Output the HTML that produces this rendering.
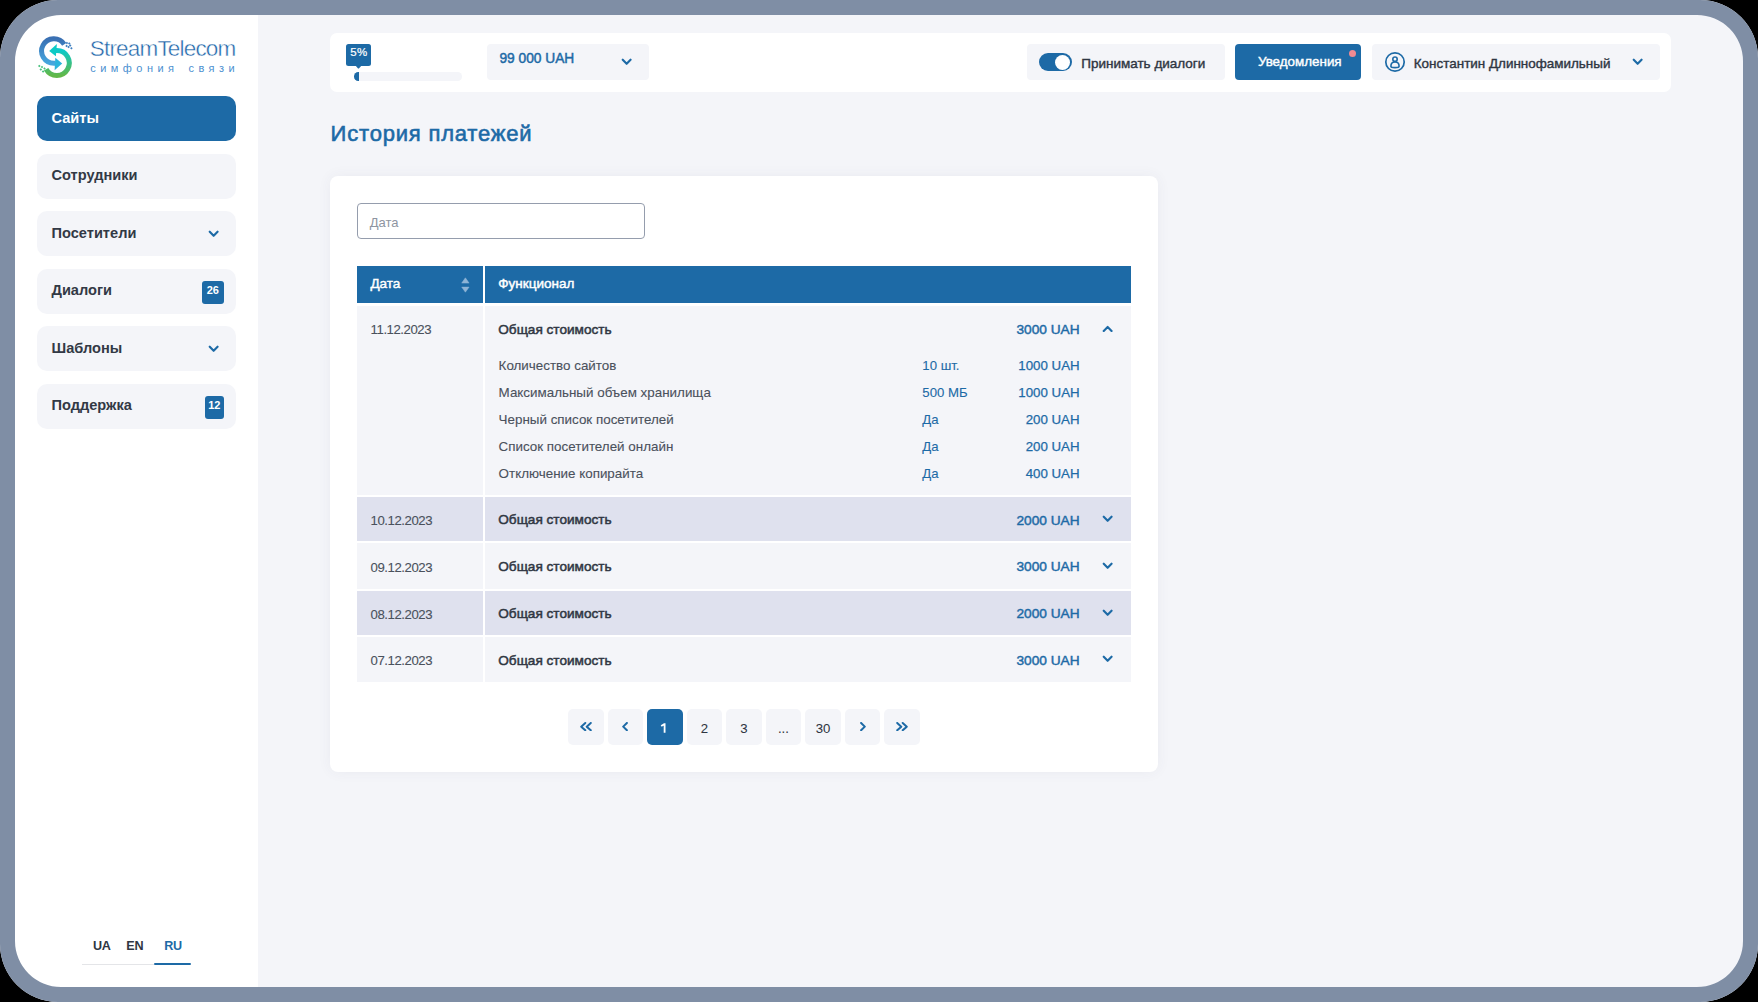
<!DOCTYPE html><html><head><meta charset="utf-8"><title>История платежей</title><style>html,body{margin:0;padding:0;width:1758px;height:1002px;overflow:hidden;background:#000;font-family:"Liberation Sans", sans-serif;}</style></head><body>
<div style="position:absolute;left:0;top:0;width:1758px;height:1002px;background:#f4f5f9"></div>
<div style="position:absolute;left:15px;top:15px;width:243px;height:972px;background:#fff;border-radius:0px;"></div>
<svg style="position:absolute;left:34px;top:32px" width="44" height="50" viewBox="0 0 44 50">
<defs>
<linearGradient id="gb" x1="0" y1="0" x2="0" y2="1"><stop offset="0" stop-color="#3a70b3"/><stop offset="1" stop-color="#45a6de"/></linearGradient>
<linearGradient id="gg" x1="0" y1="0" x2="0" y2="1"><stop offset="0" stop-color="#0cc9c9"/><stop offset="1" stop-color="#62b849"/></linearGradient>
</defs>
<path d="M30.22 12.30 A12.3 12.3 0 1 0 19.90 31.30 L21.5 31.30" fill="none" stroke="url(#gb)" stroke-width="5.0"/><path d="M21.3 25.8 L28.2 31.5 L20.6 38.3 Z" fill="#2bb3dc"/><path d="M22.0 18.60 L22.85 18.60 A12.4 12.4 0 1 1 12.11 37.20" fill="none" stroke="url(#gg)" stroke-width="5.0"/><path d="M22.9 11.9 L15.2 19 L21.9 24.2 Z" fill="#0ccbc6"/><rect x="32.0" y="10.0" width="1.8" height="1.8" transform="rotate(45 32.9 10.9)" fill="#3f7fc0"/><rect x="34.4" y="10.7" width="1.8" height="1.8" transform="rotate(45 35.3 11.6)" fill="#3f7fc0"/><rect x="35.300000000000004" y="12.5" width="1.8" height="1.8" transform="rotate(45 36.2 13.4)" fill="#3f7fc0"/><rect x="31.700000000000003" y="13.0" width="1.8" height="1.8" transform="rotate(45 32.6 13.9)" fill="#3f7fc0"/><rect x="33.7" y="14.2" width="1.8" height="1.8" transform="rotate(45 34.6 15.1)" fill="#3f7fc0"/><rect x="36.5" y="15.4" width="1.8" height="1.8" transform="rotate(45 37.4 16.3)" fill="#3f7fc0"/><rect x="4.3999999999999995" y="33.0" width="1.8" height="1.8" transform="rotate(45 5.3 33.9)" fill="#45c07a"/><rect x="7.1" y="34.2" width="1.8" height="1.8" transform="rotate(45 8.0 35.1)" fill="#45c07a"/><rect x="9.6" y="35.5" width="1.8" height="1.8" transform="rotate(45 10.5 36.4)" fill="#45c07a"/><rect x="5.8999999999999995" y="36.5" width="1.8" height="1.8" transform="rotate(45 6.8 37.4)" fill="#45c07a"/><rect x="8.2" y="38.5" width="1.8" height="1.8" transform="rotate(45 9.1 39.4)" fill="#45c07a"/></svg>
<div style="position:absolute;left:89.8px;top:38.15px;font-size:22.5px;line-height:1;font-weight:400;color:#2266a9;letter-spacing:-0.82px;white-space:nowrap;font-family:'Liberation Sans', sans-serif;-webkit-text-stroke:0.42px #fff;">StreamTelecom</div>
<div style="position:absolute;left:90.3px;top:62.59px;font-size:11px;line-height:1;font-weight:400;color:#4b8fd0;letter-spacing:4.45px;white-space:nowrap;font-family:'Liberation Sans', sans-serif;word-spacing:2.5px">симфония связи</div>
<div style="position:absolute;left:36.6px;top:96px;width:199.9px;height:45px;background:#1d6aa6;border-radius:10px;"></div>
<div style="position:absolute;left:51.5px;top:110.94px;font-size:14.6px;line-height:1;font-weight:700;color:#fff;letter-spacing:0px;white-space:nowrap;font-family:'Liberation Sans', sans-serif;">Сайты</div>
<div style="position:absolute;left:36.6px;top:153.5px;width:199.9px;height:45.0px;background:#f4f5f9;border-radius:10px;"></div>
<div style="position:absolute;left:51.5px;top:168.44px;font-size:14.6px;line-height:1;font-weight:700;color:#323945;letter-spacing:0px;white-space:nowrap;font-family:'Liberation Sans', sans-serif;">Сотрудники</div>
<div style="position:absolute;left:36.6px;top:211px;width:199.9px;height:45px;background:#f4f5f9;border-radius:10px;"></div>
<div style="position:absolute;left:51.5px;top:225.94px;font-size:14.6px;line-height:1;font-weight:700;color:#323945;letter-spacing:0px;white-space:nowrap;font-family:'Liberation Sans', sans-serif;">Посетители</div>
<svg style="position:absolute;left:208.05px;top:229.6px" width="11.3" height="7.8" viewBox="0 0 11.3 7.8"><path d="M0.73 0.73 L4.65 4.85 L8.57 0.73" transform="translate(1,1)" fill="none" stroke="#1d6aa6" stroke-width="2.1" stroke-linecap="round" stroke-linejoin="round"/></svg>
<div style="position:absolute;left:36.6px;top:268.5px;width:199.9px;height:45.0px;background:#f4f5f9;border-radius:10px;"></div>
<div style="position:absolute;left:51.5px;top:283.44px;font-size:14.6px;line-height:1;font-weight:700;color:#323945;letter-spacing:0px;white-space:nowrap;font-family:'Liberation Sans', sans-serif;">Диалоги</div>
<div style="position:absolute;left:201.5px;top:281.1px;width:22.5px;height:22.5px;background:#1d6aa6;border-radius:3px;"></div>
<div style="position:absolute;left:12.75px;width:400px;text-align:center;top:285.29px;font-size:11px;line-height:1;font-weight:700;color:#fff;letter-spacing:0px;white-space:nowrap;font-family:'Liberation Sans', sans-serif;">26</div>
<div style="position:absolute;left:36.6px;top:326px;width:199.9px;height:45px;background:#f4f5f9;border-radius:10px;"></div>
<div style="position:absolute;left:51.5px;top:340.94px;font-size:14.6px;line-height:1;font-weight:700;color:#323945;letter-spacing:0px;white-space:nowrap;font-family:'Liberation Sans', sans-serif;">Шаблоны</div>
<svg style="position:absolute;left:208.05px;top:344.6px" width="11.3" height="7.8" viewBox="0 0 11.3 7.8"><path d="M0.73 0.73 L4.65 4.85 L8.57 0.73" transform="translate(1,1)" fill="none" stroke="#1d6aa6" stroke-width="2.1" stroke-linecap="round" stroke-linejoin="round"/></svg>
<div style="position:absolute;left:36.6px;top:383.5px;width:199.9px;height:45.0px;background:#f4f5f9;border-radius:10px;"></div>
<div style="position:absolute;left:51.5px;top:398.44px;font-size:14.6px;line-height:1;font-weight:700;color:#323945;letter-spacing:0px;white-space:nowrap;font-family:'Liberation Sans', sans-serif;">Поддержка</div>
<div style="position:absolute;left:204.5px;top:396.1px;width:19.5px;height:22.5px;background:#1d6aa6;border-radius:3px;"></div>
<div style="position:absolute;left:14.25px;width:400px;text-align:center;top:400.29px;font-size:11px;line-height:1;font-weight:700;color:#fff;letter-spacing:0px;white-space:nowrap;font-family:'Liberation Sans', sans-serif;">12</div>
<div style="position:absolute;left:92.9px;top:939.83px;font-size:12.6px;line-height:1;font-weight:700;color:#2f3642;letter-spacing:-0.3px;white-space:nowrap;font-family:'Liberation Sans', sans-serif;">UA</div>
<div style="position:absolute;left:126.3px;top:939.83px;font-size:12.6px;line-height:1;font-weight:700;color:#2f3642;letter-spacing:-0.3px;white-space:nowrap;font-family:'Liberation Sans', sans-serif;">EN</div>
<div style="position:absolute;left:164.2px;top:939.83px;font-size:12.6px;line-height:1;font-weight:700;color:#1d6aa6;letter-spacing:-0.3px;white-space:nowrap;font-family:'Liberation Sans', sans-serif;">RU</div>
<div style="position:absolute;left:82.3px;top:963.6px;width:72.10000000000001px;height:1.5px;background:#e4e5e8;border-radius:0px;"></div>
<div style="position:absolute;left:154.4px;top:963.2px;width:36.19999999999999px;height:2.199999999999932px;background:#1d6aa6;border-radius:1px;"></div>
<div style="position:absolute;left:330px;top:32.5px;width:1341px;height:59.0px;background:#fff;border-radius:7px;"></div>
<div style="position:absolute;left:346.1px;top:43.7px;width:25.099999999999966px;height:22.200000000000003px;background:#1d6aa6;border-radius:2.5px;"></div>
<svg style="position:absolute;left:355.4px;top:65.4px" width="7" height="4" viewBox="0 0 7 4"><path d="M0 0 L7 0 L3.9 3.4 Q3.5 3.8 3.1 3.4 Z" fill="#1d6aa6"/></svg>
<div style="position:absolute;left:158.89999999999998px;width:400px;text-align:center;top:47.27px;font-size:11.5px;line-height:1;font-weight:400;color:#fff;letter-spacing:0.3px;white-space:nowrap;font-family:'Liberation Sans', sans-serif;-webkit-text-stroke:0.2px #fff;">5%</div>
<div style="position:absolute;left:354px;top:72.1px;width:108.30000000000001px;height:8.600000000000009px;background:#f4f5f9;border-radius:4.3px;"></div>
<div style="position:absolute;left:354px;top:72.1px;width:5.199999999999989px;height:8.600000000000009px;background:#1d6aa6;border-radius:4.3px;border-top-right-radius:0;border-bottom-right-radius:0"></div>
<div style="position:absolute;left:486.8px;top:44px;width:161.90000000000003px;height:36.3px;background:#f4f5f9;border-radius:4px;"></div>
<div style="position:absolute;left:499.4px;top:52.26px;font-size:13.75px;line-height:1;font-weight:400;color:#1d6aa6;letter-spacing:0px;white-space:nowrap;font-family:'Liberation Sans', sans-serif;-webkit-text-stroke:0.45px #1d6aa6;">99 000 UAH</div>
<svg style="position:absolute;left:620.55px;top:58.1px" width="11.3" height="7.8" viewBox="0 0 11.3 7.8"><path d="M0.73 0.73 L4.65 4.85 L8.57 0.73" transform="translate(1,1)" fill="none" stroke="#1d6aa6" stroke-width="2.1" stroke-linecap="round" stroke-linejoin="round"/></svg>
<div style="position:absolute;left:1026.5px;top:44px;width:198.0px;height:36.3px;background:#f4f5f9;border-radius:4px;"></div>
<div style="position:absolute;left:1039.1px;top:53.2px;width:32.600000000000136px;height:18.0px;background:#1d6aa6;border-radius:9px;"></div>
<div style="position:absolute;left:1055.2px;top:54.9px;width:14.700000000000045px;height:14.699999999999996px;background:#fff;border-radius:8px;"></div>
<div style="position:absolute;left:1081.2px;top:56.77px;font-size:13.5px;line-height:1;font-weight:400;color:#2f3642;letter-spacing:0px;white-space:nowrap;font-family:'Liberation Sans', sans-serif;-webkit-text-stroke:0.4px #2f3642;">Принимать диалоги</div>
<div style="position:absolute;left:1235.3px;top:44px;width:126.0px;height:36.400000000000006px;background:#1d6aa6;border-radius:4px;"></div>
<div style="position:absolute;left:1257.9px;top:55.16px;font-size:13.4px;line-height:1;font-weight:400;color:#fff;letter-spacing:0px;white-space:nowrap;font-family:'Liberation Sans', sans-serif;-webkit-text-stroke:0.4px #fff;">Уведомления</div>
<div style="position:absolute;left:1348.7px;top:49.7px;width:7.2999999999999545px;height:7.399999999999999px;background:#f08a92;border-radius:4px;"></div>
<div style="position:absolute;left:1372.3px;top:44px;width:287.79999999999995px;height:36.3px;background:#f4f5f9;border-radius:4px;"></div>
<svg style="position:absolute;left:1383.8px;top:51px" width="22" height="22" viewBox="0 0 22 22"><circle cx="11" cy="11" r="9.2" fill="none" stroke="#1d6aa6" stroke-width="1.7"/><circle cx="11" cy="8.2" r="2.2" fill="none" stroke="#1d6aa6" stroke-width="1.6"/><path d="M6.9 15.2 C6.9 12.4 8.7 11 11 11 C13.3 11 15.1 12.4 15.1 15.2 C15.1 16.4 13.5 16.6 11 16.6 C8.5 16.6 6.9 16.4 6.9 15.2 Z" fill="none" stroke="#1d6aa6" stroke-width="1.6"/></svg>
<div style="position:absolute;left:1413.8px;top:56.71px;font-size:13.45px;line-height:1;font-weight:400;color:#2f3642;letter-spacing:0px;white-space:nowrap;font-family:'Liberation Sans', sans-serif;-webkit-text-stroke:0.4px #2f3642;">Константин Длиннофамильный</div>
<svg style="position:absolute;left:1631.95px;top:58.4px" width="11.3" height="7.8" viewBox="0 0 11.3 7.8"><path d="M0.73 0.73 L4.65 4.85 L8.57 0.73" transform="translate(1,1)" fill="none" stroke="#1d6aa6" stroke-width="2.1" stroke-linecap="round" stroke-linejoin="round"/></svg>
<div style="position:absolute;left:330.6px;top:122.78px;font-size:22px;line-height:1;font-weight:400;color:#1d6aa6;letter-spacing:0.8px;white-space:nowrap;font-family:'Liberation Sans', sans-serif;-webkit-text-stroke:0.6px #1d6aa6;">История платежей</div>
<div style="position:absolute;left:330px;top:176px;width:828px;height:595.7px;background:#fff;border-radius:8px;box-shadow:0 0 14px rgba(60,70,110,0.06)"></div>
<div style="position:absolute;left:357.3px;top:203.2px;width:285.3px;height:33.4px;border:1px solid #959dad;border-radius:4px;background:#fff"></div>
<div style="position:absolute;left:369.8px;top:216.00px;font-size:13px;line-height:1;font-weight:400;color:#8e95a1;letter-spacing:0px;white-space:nowrap;font-family:'Liberation Sans', sans-serif;">Дата</div>
<div style="position:absolute;left:357px;top:266.4px;width:125.69999999999999px;height:37.10000000000002px;background:#1d6aa6;border-radius:0px;"></div>
<div style="position:absolute;left:484.9px;top:266.4px;width:646.1px;height:37.10000000000002px;background:#1d6aa6;border-radius:0px;"></div>
<div style="position:absolute;left:370.4px;top:276.57px;font-size:13.5px;line-height:1;font-weight:400;color:#fff;letter-spacing:0px;white-space:nowrap;font-family:'Liberation Sans', sans-serif;-webkit-text-stroke:0.45px #fff;">Дата</div>
<svg style="position:absolute;left:460.8px;top:277px" width="9" height="16" viewBox="0 0 9 16"><path d="M0.7 6.1 L4.4 0.8 L8.1 6.1 Z" fill="#8fb4d6" stroke="#8fb4d6" stroke-width="0.5" stroke-linejoin="round"/><path d="M0.7 10.1 L4.4 15.2 L8.1 10.1 Z" fill="#8fb4d6" stroke="#8fb4d6" stroke-width="0.5" stroke-linejoin="round"/></svg>
<div style="position:absolute;left:498.3px;top:276.57px;font-size:13.5px;line-height:1;font-weight:400;color:#fff;letter-spacing:0px;white-space:nowrap;font-family:'Liberation Sans', sans-serif;-webkit-text-stroke:0.45px #fff;">Функционал</div>
<div style="position:absolute;left:357px;top:305.5px;width:126px;height:189.60000000000002px;background:#f4f5f9;border-radius:0px;"></div>
<div style="position:absolute;left:485px;top:305.5px;width:646px;height:189.60000000000002px;background:#f4f5f9;border-radius:0px;"></div>
<div style="position:absolute;left:370.6px;top:323.23px;font-size:13.2px;line-height:1;font-weight:400;color:#4a515c;letter-spacing:-0.45px;white-space:nowrap;font-family:'Liberation Sans', sans-serif;-webkit-text-stroke:0.1px #4a515c;">11.12.2023</div>
<div style="position:absolute;left:498.3px;top:322.59px;font-size:13.6px;line-height:1;font-weight:400;color:#2f3642;letter-spacing:0px;white-space:nowrap;font-family:'Liberation Sans', sans-serif;-webkit-text-stroke:0.5px #2f3642;">Общая стоимость</div>
<div style="position:absolute;right:678.4000000000001px;text-align:right;top:322.80px;font-size:13.7px;line-height:1;font-weight:400;color:#1d6aa6;letter-spacing:0px;white-space:nowrap;font-family:'Liberation Sans', sans-serif;-webkit-text-stroke:0.45px #1d6aa6;">3000 UAH</div>
<svg style="position:absolute;left:1101.75px;top:324.7px" width="11.3" height="7.8" viewBox="0 0 11.3 7.8"><path d="M0.73 5.06 L4.65 0.95 L8.57 5.06" transform="translate(1,1)" fill="none" stroke="#1d6aa6" stroke-width="2.1" stroke-linecap="round" stroke-linejoin="round"/></svg>
<div style="position:absolute;left:357px;top:496.8px;width:126px;height:44.400000000000034px;background:#dfe1ee;border-radius:0px;"></div>
<div style="position:absolute;left:485px;top:496.8px;width:646px;height:44.400000000000034px;background:#dfe1ee;border-radius:0px;"></div>
<div style="position:absolute;left:370.6px;top:513.93px;font-size:13.2px;line-height:1;font-weight:400;color:#4a515c;letter-spacing:-0.45px;white-space:nowrap;font-family:'Liberation Sans', sans-serif;-webkit-text-stroke:0.1px #4a515c;">10.12.2023</div>
<div style="position:absolute;left:498.3px;top:513.29px;font-size:13.6px;line-height:1;font-weight:400;color:#2f3642;letter-spacing:0px;white-space:nowrap;font-family:'Liberation Sans', sans-serif;-webkit-text-stroke:0.5px #2f3642;">Общая стоимость</div>
<div style="position:absolute;right:678.4000000000001px;text-align:right;top:513.50px;font-size:13.7px;line-height:1;font-weight:400;color:#1d6aa6;letter-spacing:0px;white-space:nowrap;font-family:'Liberation Sans', sans-serif;-webkit-text-stroke:0.45px #1d6aa6;">2000 UAH</div>
<svg style="position:absolute;left:1101.95px;top:515.1px" width="11.3" height="7.8" viewBox="0 0 11.3 7.8"><path d="M0.73 0.73 L4.65 4.85 L8.57 0.73" transform="translate(1,1)" fill="none" stroke="#1d6aa6" stroke-width="2.1" stroke-linecap="round" stroke-linejoin="round"/></svg>
<div style="position:absolute;left:357px;top:543.3px;width:126px;height:45.30000000000007px;background:#f4f5f9;border-radius:0px;"></div>
<div style="position:absolute;left:485px;top:543.3px;width:646px;height:45.30000000000007px;background:#f4f5f9;border-radius:0px;"></div>
<div style="position:absolute;left:370.6px;top:560.88px;font-size:13.2px;line-height:1;font-weight:400;color:#4a515c;letter-spacing:-0.45px;white-space:nowrap;font-family:'Liberation Sans', sans-serif;-webkit-text-stroke:0.1px #4a515c;">09.12.2023</div>
<div style="position:absolute;left:498.3px;top:560.24px;font-size:13.6px;line-height:1;font-weight:400;color:#2f3642;letter-spacing:0px;white-space:nowrap;font-family:'Liberation Sans', sans-serif;-webkit-text-stroke:0.5px #2f3642;">Общая стоимость</div>
<div style="position:absolute;right:678.4000000000001px;text-align:right;top:560.45px;font-size:13.7px;line-height:1;font-weight:400;color:#1d6aa6;letter-spacing:0px;white-space:nowrap;font-family:'Liberation Sans', sans-serif;-webkit-text-stroke:0.45px #1d6aa6;">3000 UAH</div>
<svg style="position:absolute;left:1101.95px;top:562.05px" width="11.3" height="7.8" viewBox="0 0 11.3 7.8"><path d="M0.73 0.73 L4.65 4.85 L8.57 0.73" transform="translate(1,1)" fill="none" stroke="#1d6aa6" stroke-width="2.1" stroke-linecap="round" stroke-linejoin="round"/></svg>
<div style="position:absolute;left:357px;top:590.5px;width:126px;height:44.200000000000045px;background:#dfe1ee;border-radius:0px;"></div>
<div style="position:absolute;left:485px;top:590.5px;width:646px;height:44.200000000000045px;background:#dfe1ee;border-radius:0px;"></div>
<div style="position:absolute;left:370.6px;top:607.53px;font-size:13.2px;line-height:1;font-weight:400;color:#4a515c;letter-spacing:-0.45px;white-space:nowrap;font-family:'Liberation Sans', sans-serif;-webkit-text-stroke:0.1px #4a515c;">08.12.2023</div>
<div style="position:absolute;left:498.3px;top:606.89px;font-size:13.6px;line-height:1;font-weight:400;color:#2f3642;letter-spacing:0px;white-space:nowrap;font-family:'Liberation Sans', sans-serif;-webkit-text-stroke:0.5px #2f3642;">Общая стоимость</div>
<div style="position:absolute;right:678.4000000000001px;text-align:right;top:607.10px;font-size:13.7px;line-height:1;font-weight:400;color:#1d6aa6;letter-spacing:0px;white-space:nowrap;font-family:'Liberation Sans', sans-serif;-webkit-text-stroke:0.45px #1d6aa6;">2000 UAH</div>
<svg style="position:absolute;left:1101.95px;top:608.7px" width="11.3" height="7.8" viewBox="0 0 11.3 7.8"><path d="M0.73 0.73 L4.65 4.85 L8.57 0.73" transform="translate(1,1)" fill="none" stroke="#1d6aa6" stroke-width="2.1" stroke-linecap="round" stroke-linejoin="round"/></svg>
<div style="position:absolute;left:357px;top:636.8px;width:126px;height:44.90000000000009px;background:#f4f5f9;border-radius:0px;"></div>
<div style="position:absolute;left:485px;top:636.8px;width:646px;height:44.90000000000009px;background:#f4f5f9;border-radius:0px;"></div>
<div style="position:absolute;left:370.6px;top:654.18px;font-size:13.2px;line-height:1;font-weight:400;color:#4a515c;letter-spacing:-0.45px;white-space:nowrap;font-family:'Liberation Sans', sans-serif;-webkit-text-stroke:0.1px #4a515c;">07.12.2023</div>
<div style="position:absolute;left:498.3px;top:653.54px;font-size:13.6px;line-height:1;font-weight:400;color:#2f3642;letter-spacing:0px;white-space:nowrap;font-family:'Liberation Sans', sans-serif;-webkit-text-stroke:0.5px #2f3642;">Общая стоимость</div>
<div style="position:absolute;right:678.4000000000001px;text-align:right;top:653.75px;font-size:13.7px;line-height:1;font-weight:400;color:#1d6aa6;letter-spacing:0px;white-space:nowrap;font-family:'Liberation Sans', sans-serif;-webkit-text-stroke:0.45px #1d6aa6;">3000 UAH</div>
<svg style="position:absolute;left:1101.95px;top:655.35px" width="11.3" height="7.8" viewBox="0 0 11.3 7.8"><path d="M0.73 0.73 L4.65 4.85 L8.57 0.73" transform="translate(1,1)" fill="none" stroke="#1d6aa6" stroke-width="2.1" stroke-linecap="round" stroke-linejoin="round"/></svg>
<div style="position:absolute;left:498.6px;top:358.96px;font-size:13.4px;line-height:1;font-weight:400;color:#4a515c;letter-spacing:0px;white-space:nowrap;font-family:'Liberation Sans', sans-serif;-webkit-text-stroke:0.1px #4a515c;">Количество сайтов</div>
<div style="position:absolute;left:922.3px;top:359.13px;font-size:13.2px;line-height:1;font-weight:400;color:#1d6aa6;letter-spacing:0px;white-space:nowrap;font-family:'Liberation Sans', sans-serif;-webkit-text-stroke:0.1px #1d6aa6;">10 шт.</div>
<div style="position:absolute;right:678.4000000000001px;text-align:right;top:359.04px;font-size:13.3px;line-height:1;font-weight:400;color:#1d6aa6;letter-spacing:0px;white-space:nowrap;font-family:'Liberation Sans', sans-serif;-webkit-text-stroke:0.25px #1d6aa6;">1000 UAH</div>
<div style="position:absolute;left:498.6px;top:386.06px;font-size:13.4px;line-height:1;font-weight:400;color:#4a515c;letter-spacing:0px;white-space:nowrap;font-family:'Liberation Sans', sans-serif;-webkit-text-stroke:0.1px #4a515c;">Максимальный объем хранилища</div>
<div style="position:absolute;left:922.3px;top:386.23px;font-size:13.2px;line-height:1;font-weight:400;color:#1d6aa6;letter-spacing:0px;white-space:nowrap;font-family:'Liberation Sans', sans-serif;-webkit-text-stroke:0.1px #1d6aa6;">500 МБ</div>
<div style="position:absolute;right:678.4000000000001px;text-align:right;top:386.14px;font-size:13.3px;line-height:1;font-weight:400;color:#1d6aa6;letter-spacing:0px;white-space:nowrap;font-family:'Liberation Sans', sans-serif;-webkit-text-stroke:0.25px #1d6aa6;">1000 UAH</div>
<div style="position:absolute;left:498.6px;top:412.86px;font-size:13.4px;line-height:1;font-weight:400;color:#4a515c;letter-spacing:0px;white-space:nowrap;font-family:'Liberation Sans', sans-serif;-webkit-text-stroke:0.1px #4a515c;">Черный список посетителей</div>
<div style="position:absolute;left:922.3px;top:413.03px;font-size:13.2px;line-height:1;font-weight:400;color:#1d6aa6;letter-spacing:0px;white-space:nowrap;font-family:'Liberation Sans', sans-serif;-webkit-text-stroke:0.1px #1d6aa6;">Да</div>
<div style="position:absolute;right:678.4000000000001px;text-align:right;top:412.94px;font-size:13.3px;line-height:1;font-weight:400;color:#1d6aa6;letter-spacing:0px;white-space:nowrap;font-family:'Liberation Sans', sans-serif;-webkit-text-stroke:0.25px #1d6aa6;">200 UAH</div>
<div style="position:absolute;left:498.6px;top:439.76px;font-size:13.4px;line-height:1;font-weight:400;color:#4a515c;letter-spacing:0px;white-space:nowrap;font-family:'Liberation Sans', sans-serif;-webkit-text-stroke:0.1px #4a515c;">Список посетителей онлайн</div>
<div style="position:absolute;left:922.3px;top:439.93px;font-size:13.2px;line-height:1;font-weight:400;color:#1d6aa6;letter-spacing:0px;white-space:nowrap;font-family:'Liberation Sans', sans-serif;-webkit-text-stroke:0.1px #1d6aa6;">Да</div>
<div style="position:absolute;right:678.4000000000001px;text-align:right;top:439.84px;font-size:13.3px;line-height:1;font-weight:400;color:#1d6aa6;letter-spacing:0px;white-space:nowrap;font-family:'Liberation Sans', sans-serif;-webkit-text-stroke:0.25px #1d6aa6;">200 UAH</div>
<div style="position:absolute;left:498.6px;top:466.86px;font-size:13.4px;line-height:1;font-weight:400;color:#4a515c;letter-spacing:0px;white-space:nowrap;font-family:'Liberation Sans', sans-serif;-webkit-text-stroke:0.1px #4a515c;">Отключение копирайта</div>
<div style="position:absolute;left:922.3px;top:467.03px;font-size:13.2px;line-height:1;font-weight:400;color:#1d6aa6;letter-spacing:0px;white-space:nowrap;font-family:'Liberation Sans', sans-serif;-webkit-text-stroke:0.1px #1d6aa6;">Да</div>
<div style="position:absolute;right:678.4000000000001px;text-align:right;top:466.94px;font-size:13.3px;line-height:1;font-weight:400;color:#1d6aa6;letter-spacing:0px;white-space:nowrap;font-family:'Liberation Sans', sans-serif;-webkit-text-stroke:0.25px #1d6aa6;">400 UAH</div>
<div style="position:absolute;left:568.0px;top:709px;width:35.60000000000002px;height:35.700000000000045px;background:#f4f5f9;border-radius:5px;"></div>
<svg style="position:absolute;left:579.8px;top:721.8px" width="12" height="9.4" viewBox="0 0 12 9.4"><path d="M5.3 1.0 L1.2 4.65 L5.3 8.3 M10.8 1.0 L6.7 4.65 L10.8 8.3" fill="none" stroke="#1d6aa6" stroke-width="2.0" stroke-linecap="round" stroke-linejoin="round"/></svg>
<div style="position:absolute;left:607.53px;top:709px;width:35.60000000000002px;height:35.700000000000045px;background:#f4f5f9;border-radius:5px;"></div>
<svg style="position:absolute;left:622.23px;top:721.8px" width="6" height="9.4" viewBox="0 0 6 9.4"><path d="M4.9 1.0 L1.2 4.65 L4.9 8.3" fill="none" stroke="#1d6aa6" stroke-width="2.0" stroke-linecap="round" stroke-linejoin="round"/></svg>
<div style="position:absolute;left:647.06px;top:709px;width:35.60000000000002px;height:35.700000000000045px;background:#1d6aa6;border-radius:5px;"></div>
<svg style="position:absolute;left:660.36px;top:723.4px" width="7" height="10" viewBox="0 0 7 10"><path d="M4.6 0.2 L4.6 9.8 M4.6 0.9 L1.2 3.1" fill="none" stroke="#fff" stroke-width="1.8" stroke-linejoin="round"/></svg>
<div style="position:absolute;left:686.59px;top:709px;width:35.60000000000002px;height:35.700000000000045px;background:#f4f5f9;border-radius:5px;"></div>
<div style="position:absolute;left:504.39px;width:400px;text-align:center;top:721.93px;font-size:13.2px;line-height:1;font-weight:400;color:#2f3642;letter-spacing:0px;white-space:nowrap;font-family:'Liberation Sans', sans-serif;-webkit-text-stroke:0.05px #2f3642;">2</div>
<div style="position:absolute;left:726.12px;top:709px;width:35.60000000000002px;height:35.700000000000045px;background:#f4f5f9;border-radius:5px;"></div>
<div style="position:absolute;left:543.92px;width:400px;text-align:center;top:721.93px;font-size:13.2px;line-height:1;font-weight:400;color:#2f3642;letter-spacing:0px;white-space:nowrap;font-family:'Liberation Sans', sans-serif;-webkit-text-stroke:0.05px #2f3642;">3</div>
<div style="position:absolute;left:765.65px;top:709px;width:35.60000000000002px;height:35.700000000000045px;background:#f4f5f9;border-radius:5px;"></div>
<div style="position:absolute;left:583.4499999999999px;width:400px;text-align:center;top:721.93px;font-size:13.2px;line-height:1;font-weight:400;color:#2f3642;letter-spacing:0px;white-space:nowrap;font-family:'Liberation Sans', sans-serif;-webkit-text-stroke:0.05px #2f3642;">...</div>
<div style="position:absolute;left:805.18px;top:709px;width:35.60000000000002px;height:35.700000000000045px;background:#f4f5f9;border-radius:5px;"></div>
<div style="position:absolute;left:622.98px;width:400px;text-align:center;top:721.93px;font-size:13.2px;line-height:1;font-weight:400;color:#2f3642;letter-spacing:0px;white-space:nowrap;font-family:'Liberation Sans', sans-serif;-webkit-text-stroke:0.05px #2f3642;">30</div>
<div style="position:absolute;left:844.71px;top:709px;width:35.59999999999991px;height:35.700000000000045px;background:#f4f5f9;border-radius:5px;"></div>
<svg style="position:absolute;left:859.61px;top:721.8px" width="6" height="9.4" viewBox="0 0 6 9.4"><path d="M1.1 1.0 L4.8 4.65 L1.1 8.3" fill="none" stroke="#1d6aa6" stroke-width="2.0" stroke-linecap="round" stroke-linejoin="round"/></svg>
<div style="position:absolute;left:884.24px;top:709px;width:35.60000000000002px;height:35.700000000000045px;background:#f4f5f9;border-radius:5px;"></div>
<svg style="position:absolute;left:896.04px;top:721.8px" width="12" height="9.4" viewBox="0 0 12 9.4"><path d="M1.2 1.0 L5.3 4.65 L1.2 8.3 M6.7 1.0 L10.8 4.65 L6.7 8.3" fill="none" stroke="#1d6aa6" stroke-width="2.0" stroke-linecap="round" stroke-linejoin="round"/></svg>
<svg style="position:absolute;left:0;top:0" width="1758" height="1002" viewBox="0 0 1758 1002"><path fill-rule="evenodd" fill="#000" d="M0 0 H1758 V1002 H0 Z M58 0 H1700 A58 58 0 0 1 1758 58 V944 A58 58 0 0 1 1700 1002 H58 A58 58 0 0 1 0 944 V58 A58 58 0 0 1 58 0 Z"/><path fill-rule="evenodd" fill="#7f8ea5" d="M58 0 H1700 A58 58 0 0 1 1758 58 V944 A58 58 0 0 1 1700 1002 H58 A58 58 0 0 1 0 944 V58 A58 58 0 0 1 58 0 Z M61 15 H1697 A46 46 0 0 1 1743 61 V941 A46 46 0 0 1 1697 987 H61 A46 46 0 0 1 15 941 V61 A46 46 0 0 1 61 15 Z"/></svg>
</body></html>
